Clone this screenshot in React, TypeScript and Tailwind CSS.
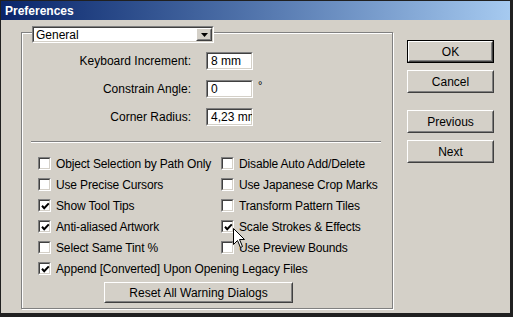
import React from 'react'

const font = { fontFamily: '"Liberation Sans", Arial, sans-serif' }

function Sunken({ className = '', children }: { className?: string; children?: React.ReactNode }) {
  return (
    <div className={`border border-t-[#808080] border-l-[#808080] border-r-white border-b-white ${className}`}>
      <div className="h-full w-full border border-t-[#404040] border-l-[#404040] border-r-[#d4d0c8] border-b-[#d4d0c8] bg-white">
        {children}
      </div>
    </div>
  )
}

function Raised({ className = '', children }: { className?: string; children?: React.ReactNode }) {
  return (
    <div className={`border border-t-white border-l-white border-r-[#404040] border-b-[#404040] ${className}`}>
      <div className="flex h-full w-full items-center justify-center border border-t-[#d4d0c8] border-l-[#d4d0c8] border-r-[#808080] border-b-[#808080]">
        {children}
      </div>
    </div>
  )
}

function Button({ label, isDefault }: { label: string; isDefault?: boolean }) {
  const inner = <Raised className="h-full w-full">{label}</Raised>
  return isDefault ? (
    <div className="h-[23px] w-[87px] border border-black">{inner}</div>
  ) : (
    <div className="h-[23px] w-[87px]">{inner}</div>
  )
}

function Check({ label, checked }: { label: string; checked?: boolean }) {
  return (
    <div className="flex h-[21px] items-center gap-[5px] whitespace-nowrap">
      <Sunken className="h-[13px] w-[13px] shrink-0">
        {checked && (
          <svg width="11" height="11" viewBox="0 0 11 11">
            <path d="M2 4.8 L4.2 7.2 L8.8 2.4" fill="none" stroke="#000" strokeWidth="2" />
          </svg>
        )}
      </Sunken>
      <span className="tracking-[-0.15px]">{label}</span>
    </div>
  )
}

function Field({ label, value, degree }: { label: string; value: string; degree?: boolean }) {
  return (
    <div className="flex h-[18px] items-center">
      <div className="w-[170px] pr-[1px] text-right">{label}</div>
      <Sunken className="ml-[14px] h-[18px] w-[47px] overflow-hidden">
        <div className="pl-[3px] leading-[14px] whitespace-nowrap">{value}</div>
      </Sunken>
      {degree && <span className="ml-[5px] -mt-[8px] text-[11px]">°</span>}
    </div>
  )
}

export default function App() {
  return (
    <div
      className="relative flex h-[317px] w-[513px] flex-col border-t border-l border-r-[3px] border-b-[4px] border-[#202020] bg-[#d4d0c8] text-[12px] text-black"
      style={font}
    >
      <div className="flex h-[19px] items-center bg-gradient-to-r from-[#0a246a] to-[#a6caf0] pl-[4px] text-[12px] font-bold text-white">
        Preferences
      </div>

      <div className="flex pl-[20px] pt-[12px]">
        <div className="flex h-[277px] w-[372px] flex-col border border-[#808080] shadow-[inset_1px_1px_0_#fff,1px_1px_0_#fff]">
          <Sunken className="ml-[10px] -mt-[7px] h-[17px] w-[182px]">
            <div className="flex h-full items-center bg-white">
              <span className="flex-1 pl-[2px] leading-none">General</span>
              <Raised className="h-full w-[16px] bg-[#d4d0c8]">
                <svg width="7" height="4" viewBox="0 0 7 4">
                  <path d="M0 0 H7 L3.5 4 Z" fill="#000" />
                </svg>
              </Raised>
            </div>
          </Sunken>

          <div className="mt-[9px] flex flex-col gap-[10px]">
            <Field label="Keyboard Increment:" value="8 mm" />
            <Field label="Constrain Angle:" value="0" degree />
            <Field label="Corner Radius:" value="4,23 mm" />
          </div>

          <div className="mt-[15px] ml-[9px] h-[2px] w-[350px] border-t border-[#808080] border-b border-b-white" />

          <div className="mt-[10px] grid grid-cols-[183px_1fr] pl-[16px]">
            <Check label="Object Selection by Path Only" />
            <Check label="Disable Auto Add/Delete" />
            <Check label="Use Precise Cursors" />
            <Check label="Use Japanese Crop Marks" />
            <Check label="Show Tool Tips" checked />
            <Check label="Transform Pattern Tiles" />
            <Check label="Anti-aliased Artwork" checked />
            <Check label="Scale Strokes & Effects" checked />
            <Check label="Select Same Tint %" />
            <Check label="Use Preview Bounds" />
            <div className="col-span-2">
              <Check label="Append [Converted] Upon Opening Legacy Files" checked />
            </div>
          </div>

          <div className="mt-[3px] ml-[82px]">
            <Raised className="h-[21px] w-[189px]">Reset All Warning Dialogs</Raised>
          </div>
        </div>

        <div className="ml-[14px] flex flex-col pt-[8px]">
          <Button label="OK" isDefault />
          <div className="mt-[7px]">
            <Button label="Cancel" />
          </div>
          <div className="mt-[17px]">
            <Button label="Previous" />
          </div>
          <div className="mt-[7px]">
            <Button label="Next" />
          </div>
        </div>
      </div>

      <svg className="absolute left-[232px] top-[227px]" width="13" height="21" viewBox="0 0 13 21">
        <path d="M0.5 0.5 V16.5 L4.5 12.5 L7.5 19.5 L9.5 18.5 L6.5 11.5 H11.5 Z" fill="#fff" stroke="#000" strokeWidth="1" />
      </svg>
    </div>
  )
}
